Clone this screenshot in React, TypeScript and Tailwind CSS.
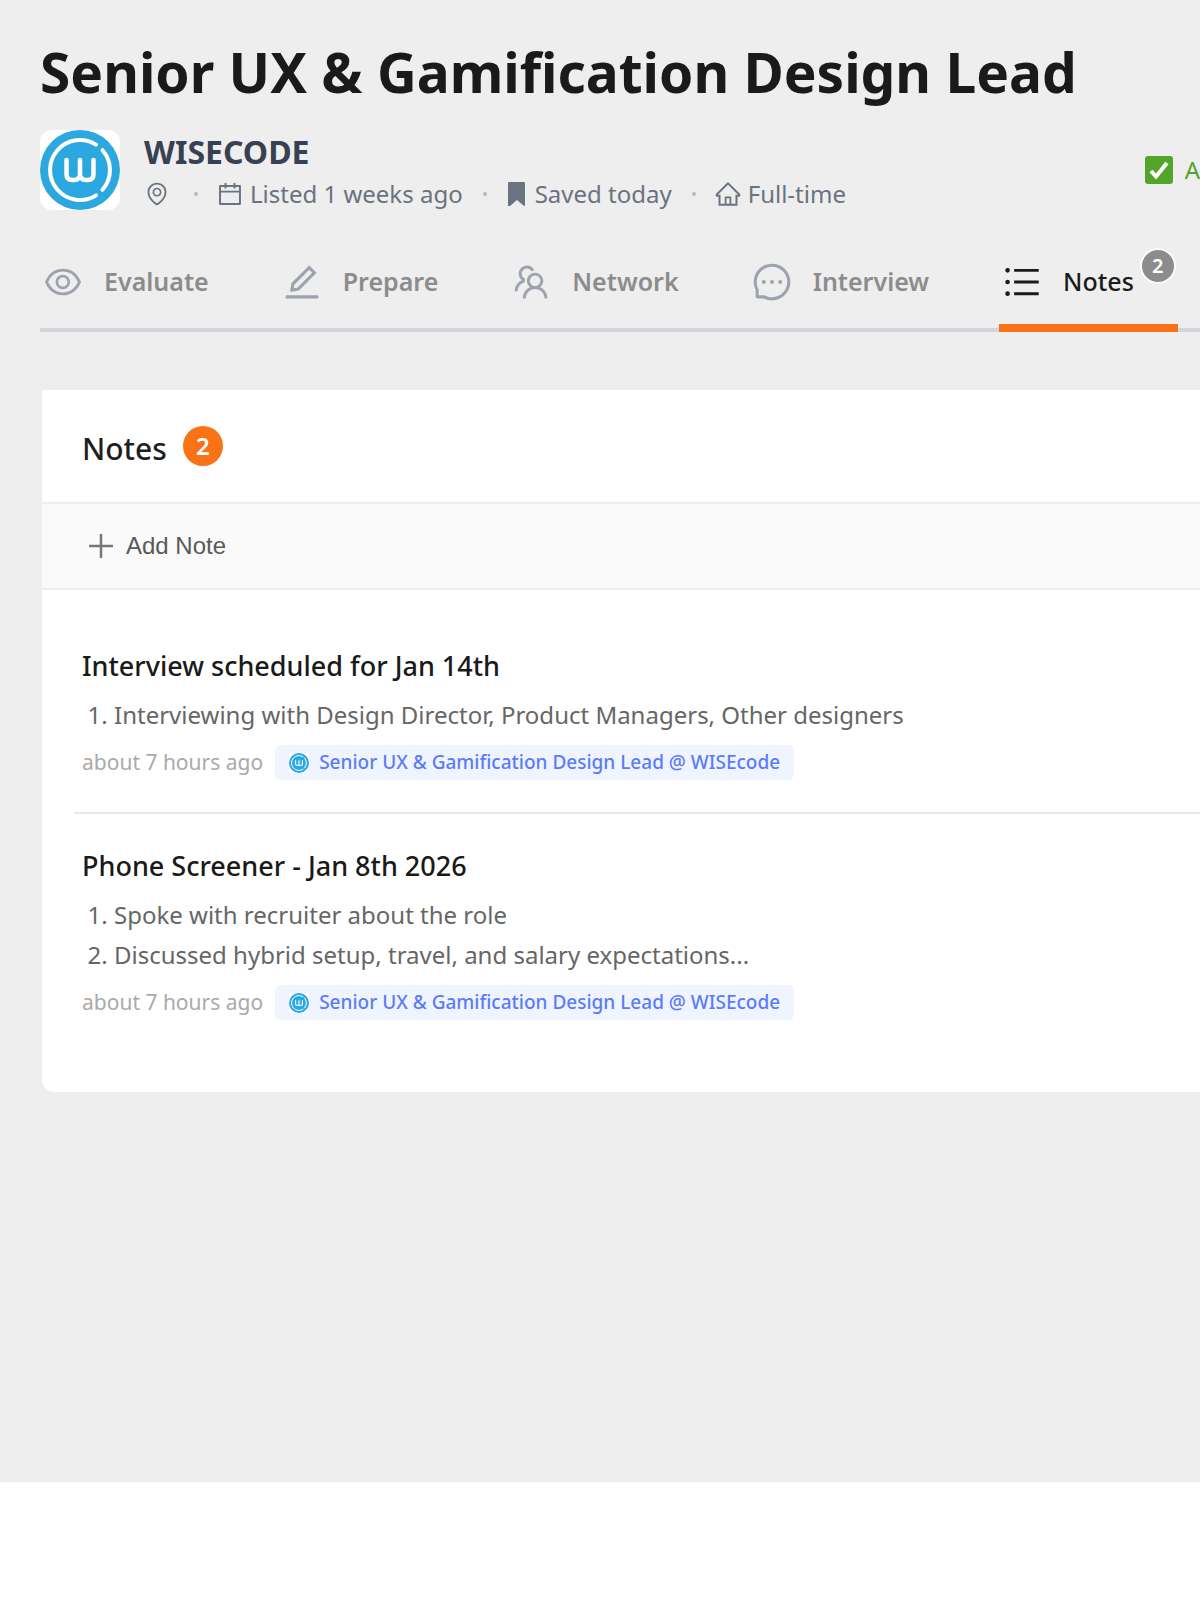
import React from "react";
import {
  AiOutlineCalendar,
  AiOutlineEdit,
  AiOutlineEnvironment,
  AiOutlineEye,
  AiOutlineHome,
  AiOutlineMessage,
  AiOutlinePlus,
  AiOutlineTeam,
  AiOutlineUnorderedList,
} from "react-icons/ai";

const tabs = [
  { label: "Evaluate", icon: AiOutlineEye },
  { label: "Prepare", icon: AiOutlineEdit },
  { label: "Network", icon: AiOutlineTeam },
  { label: "Interview", icon: AiOutlineMessage },
  { label: "Notes", icon: AiOutlineUnorderedList, count: 2, active: true },
];

const notes = [
  {
    title: "Interview scheduled for Jan 14th",
    items: [
      "Interviewing with Design Director, Product Managers, Other designers",
    ],
  },
  {
    title: "Phone Screener - Jan 8th 2026",
    items: [
      "Spoke with recruiter about the role",
      "Discussed hybrid setup, travel, and salary expectations...",
    ],
  },
];

const Logo = ({ className }: { className: string }) => (
  <svg viewBox="0 0 80 80" className={className} aria-hidden="true">
    <rect width="80" height="80" rx="12" fill="#fff" />
    <circle cx="40" cy="40" r="40" fill="#2ca8e0" />
    <g fill="none" stroke="#fff" strokeWidth="4" strokeLinecap="round">
      <path d="M56 14.6A30 30 0 1 0 56 65.4" />
      <path d="M62.5 20.2A30 30 0 0 1 62.5 59.8" />
      <path
        d="M26.500 30v14q0 6 6 6h1.500q6 0 6-6V30M40 44q0 6 6 6h1.500q6 0 6-6V30"
        strokeWidth="4.5"
      />
    </g>
  </svg>
);

const BookmarkIcon = () => (
  <svg viewBox="0 0 24 24" className="size-6" aria-hidden="true">
    <path
      d="M4 0h15a1 1 0 0 1 1 1v22a1 1 0 0 1-1 1l-7-6-7 6a1 1 0 0 1-2-1V1a1 1 0 0 1 1-1z"
      fill="currentColor"
    />
  </svg>
);

const CheckBadge = () => (
  <svg viewBox="0 0 28 28" className="size-7" aria-hidden="true">
    <rect width="28" height="28" rx="3" fill="#52a528" />
    <path d="M6 15l5 5.5L22 7" fill="none" stroke="#fff" strokeWidth="4" />
  </svg>
);

const Dot = () => (
  <span className="ml-5 mr-[18px] size-1 shrink-0 rounded-full bg-[#b4b8c0]" />
);

const App = () => {
  return (
    <main className="overflow-hidden bg-[#eeeeee] pb-[390px] font-['Noto_Sans',sans-serif]">
      <header className="pl-10 pt-10">
        <h1 className="whitespace-nowrap text-[55px] font-bold leading-[64px] text-[#1a1a1a]">
          Senior UX &amp; Gamification Design Lead
        </h1>

        <div className="mt-[26px] flex items-start gap-6">
          <Logo className="size-20 shrink-0" />
          <div>
            <p className="text-[32px] font-bold leading-[44px] text-[#374151]">
              WISECODE
            </p>
            <div className="flex items-center whitespace-nowrap text-2xl leading-[40px] text-[#6b7280]">
              <span className="flex items-center pr-1">
                <AiOutlineEnvironment className="size-[26px]" />
              </span>
              <Dot />
              <span className="flex items-center gap-1.5">
                <AiOutlineCalendar className="size-7" />
                Listed 1 weeks ago
              </span>
              <Dot />
              <span className="flex items-center gap-1.5">
                <BookmarkIcon />
                Saved today
              </span>
              <Dot />
              <span className="flex items-center gap-1.5">
                <AiOutlineHome className="size-7" />
                Full-time
              </span>
            </div>
          </div>
          <div className="ml-auto flex h-20 items-center gap-3 text-2xl text-[#52a528]">
            <CheckBadge />
            <span>A</span>
          </div>
        </div>

        <nav className="mt-[26px] flex gap-[68px] border-b-4 border-[#d1d5db]">
          {tabs.map(({ label, icon: Icon, count, active }) => (
            <button
              key={label}
              type="button"
              className={`-mb-1 flex h-[92px] items-center border-b-8 px-0.5 text-[25px] ${
                active
                  ? "border-[#f97316] font-medium text-[#1a1a1a]"
                  : "border-transparent font-semibold text-[#8c8c8c]"
              }`}
            >
              <Icon
                className={`mr-5 size-[42px] ${active ? "" : "text-[#9ca3af]"}`}
              />
              {label}
              {count && (
                <span className="ml-1.5 mt-2 flex size-9 items-center justify-center self-start rounded-full border-2 border-[#fafafa] bg-[#8c8c8c] text-xl font-semibold text-white">
                  {count}
                </span>
              )}
            </button>
          ))}
        </nav>
      </header>

      <section className="ml-[42px] mt-[58px] rounded-bl-xl bg-white">
        <div className="flex h-28 items-center gap-4 pl-10">
          <h2 className="pt-1 text-[30px] font-medium text-[#1f1f1f]">Notes</h2>
          <span className="flex size-10 items-center justify-center rounded-full bg-[#f97316] text-2xl font-semibold text-white">
            2
          </span>
        </div>

        <div className="flex h-[88px] items-center border-y-2 border-[#eeeeee] bg-[#fafafa] pl-[42px]">
          <button
            type="button"
            className="flex items-center gap-2 font-['Liberation_Sans',sans-serif] text-2xl text-[#595959]"
          >
            <AiOutlinePlus className="size-[34px] text-[#777777]" />
            Add Note
          </button>
        </div>

        <div className="pb-10 pl-8 pt-6">
          {notes.map((note) => (
            <article
              key={note.title}
              className="border-b-2 border-[#e8e8e8] pb-8 pl-2 pt-[34px] last:border-0"
            >
              <h3 className="text-[27px] font-medium leading-9 text-[#1a1a1a]">
                {note.title}
              </h3>
              <ol className="mt-[11px] list-decimal pl-8 text-2xl leading-[40px] text-[#666666]">
                {note.items.map((item) => (
                  <li key={item}>{item}</li>
                ))}
              </ol>
              <div className="mt-2.5 flex items-center gap-3">
                <time className="text-[21px] text-[#aaaaaa]">
                  about 7 hours ago
                </time>
                <a
                  href="#job"
                  className="flex h-[35px] items-center gap-2.5 rounded-md bg-[#f0f4ff] px-3.5 text-[19px] font-medium text-[#5b7cfa]"
                >
                  <Logo className="size-5" />
                  Senior UX &amp; Gamification Design Lead @ WISEcode
                </a>
              </div>
            </article>
          ))}
        </div>
      </section>
    </main>
  );
};

export default App;
